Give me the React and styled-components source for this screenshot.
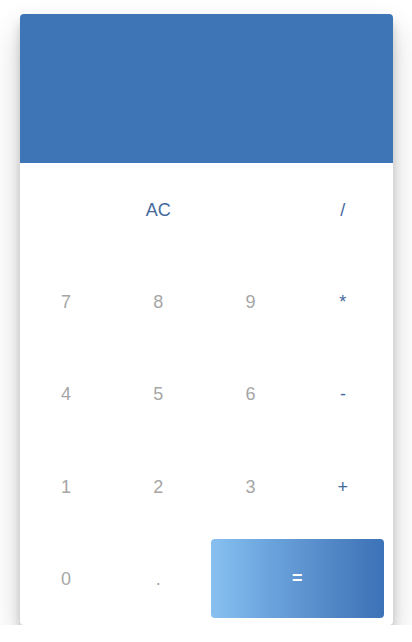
import React from "react";
import styled, { createGlobalStyle } from "styled-components";

const Global = createGlobalStyle`
  html, body { margin: 0; padding: 0; background: #ffffff; }
  body { font-family: "Liberation Sans", Arial, sans-serif; }
`;

const Page = styled.div`
  padding: 14px 19px 0 20px;
`;

const Card = styled.div`
  width: 373px;
  background: #ffffff;
  border-radius: 4px;
  overflow: hidden;
  box-shadow: 0 15px 30px rgba(0, 0, 0, 0.2), 0 8px 10px rgba(0, 0, 0, 0.16);
`;

const Display = styled.div`
  height: 149px;
  background: #3e75b7;
`;

const Keys = styled.div`
  display: grid;
  grid-template-columns: repeat(4, 1fr);
  grid-auto-rows: 92.4px;
  padding-right: 4px;
`;

const Key = styled.button`
  border: 0;
  background: transparent;
  padding: 0;
  margin: 0;
  font-family: "Liberation Sans", Arial, sans-serif;
  font-size: 18px;
  color: ${(p) => (p.$op ? "#44699d" : "#a6a6a6")};
  display: flex;
  align-items: center;
  justify-content: center;
  padding-top: 2px;
  cursor: pointer;
  grid-column: ${(p) => (p.$span ? `span ${p.$span}` : "auto")};
`;

const Equals = styled(Key)`
  margin: 6px 5px 7px 6px;
  border-radius: 4px;
  color: #ffffff;
  font-weight: bold;
  padding-top: 0;
  background: linear-gradient(to right, #87c0f0 0%, #6aa3dc 35%, #5287c6 70%, #3c72b7 100%);
`;

const keys = [
  { l: "", op: false },
  { l: "AC", op: true },
  { l: "", op: false },
  { l: "/", op: true },
  { l: "7" }, { l: "8" }, { l: "9" }, { l: "*", op: true },
  { l: "4" }, { l: "5" }, { l: "6" }, { l: "-", op: true },
  { l: "1" }, { l: "2" }, { l: "3" }, { l: "+", op: true },
  { l: "0" }, { l: "." },
];

export default function App() {
  return (
    <>
      <Global />
      <Page>
        <Card>
          <Display />
          <Keys>
            {keys.map((k, i) => (
              <Key key={i} $op={k.op}>{k.l}</Key>
            ))}
            <Equals $span={2}>=</Equals>
          </Keys>
        </Card>
      </Page>
    </>
  );
}
